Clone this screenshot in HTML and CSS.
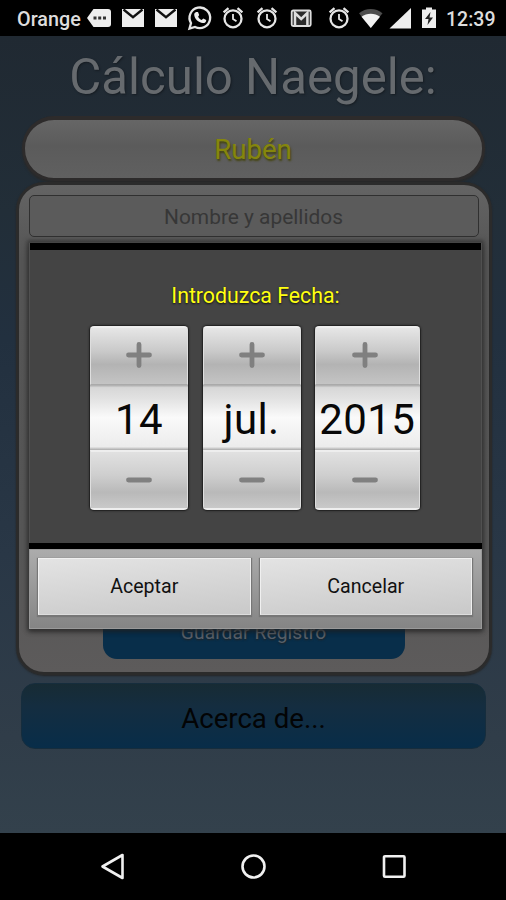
FILE: index.html
```html
<!DOCTYPE html>
<html lang="es">
<head>
<meta charset="utf-8">
<title>Cálculo Naegele</title>
<link rel="stylesheet" href="styles.css">
</head>
<body>
<svg class="defs" width="0" height="0">
  <defs>
    <symbol id="mail" viewBox="0 0 24 24"><path d="M1 3h22v18H1z" fill="#eee"/><path d="M2.500 3.500 12 11.200l9.500-7.700" fill="none" stroke="#111" stroke-width="2.300"/></symbol>
    <symbol id="alarm" viewBox="0 0 24 24"><g fill="none" stroke="#e6e6e6"><circle cx="12" cy="12.800" r="8.500" stroke-width="2.300"/><path d="M2.600 6.300 7.500 2.200M21.400 6.300 16.500 2.200" stroke-width="2.300"/><path d="M12 8v5l3.500 2.300" stroke-width="1.800"/></g></symbol>
    <symbol id="plus" viewBox="0 0 26 26"><path d="M13 2.500v21M2.500 13h21" stroke="#808080" stroke-width="4.800" stroke-linecap="round"/></symbol>
    <symbol id="minus" viewBox="0 0 26 26"><path d="M2.500 13h21" stroke="#808080" stroke-width="4.800" stroke-linecap="round"/></symbol>
  </defs>
</svg>
<div class="phone">
  <header class="status">
    <span class="carrier">Orange</span>
    <div class="icons notices">
      <svg viewBox="0 0 24 24"><path d="M0 12 6.500 3H21a3 3 0 0 1 3 3v12a3 3 0 0 1-3 3H6.500z" fill="#eee"/><path d="M6.500 10.500h3v3h-3zM11.200 10.500h3v3h-3zM16 10.500h3v3h-3z" fill="#333"/></svg>
      <svg><use href="#mail"/></svg>
      <svg><use href="#mail"/></svg>
      <svg viewBox="0 0 24 24"><path d="M1.500 22.500 3 17.100A10.300 10.300 0 1 1 7 20.900z" fill="none" stroke="#e6e6e6" stroke-width="2.300"/><path d="M8.200 6 10 5.900l1.200 3.100-1.100 1.700c.8 1.500 2 2.600 3.600 3.200l1.600-1.500 2.900 1.500c.2 1.800-1.300 3.300-3.300 3.200-4.600-.4-8.600-4.200-8.700-8.500 0-1.100.8-2.200 2-2.600z" fill="#eee"/></svg>
      <svg><use href="#alarm"/></svg>
      <svg><use href="#alarm"/></svg>
      <svg viewBox="0 0 24 24"><rect x="2.700" y="4.500" width="19" height="15.500" rx="1.500" fill="#2a2a2a" stroke="#ddd" stroke-width="1.800"/><path d="M6 19.500V7l6.200 6 6.200-6v12.500" fill="none" stroke="#ddd" stroke-width="2.500"/></svg>
    </div>
    <div class="icons system">
      <svg><use href="#alarm"/></svg>
      <svg viewBox="0 0 24 24"><path d="M2 7.200C8.500 1.500 19 1.500 25.500 7.200L13.800 22z" fill="#4d4d4d"/><path d="M4.500 10.800c5-4.200 13.500-4.200 18.500 0L13.800 22z" fill="#f2f2f2"/></svg>
      <svg viewBox="0 0 24 24"><path d="M2.500 22.500h21.500V2z" fill="#eee"/></svg>
      <svg viewBox="0 0 24 24"><path d="M5 3.500h4V1.500h6v2h4V22H5z" fill="#eee"/><path d="m13.500 6-5.500 7h3.500l-1 6 5.500-7.500h-3.500z" fill="#222"/></svg>
    </div>
    <time class="clock">12:39</time>
  </header>
  <main class="app">
    <h1 class="title">Cálculo Naegele:</h1>
    <div class="pill">Rubén</div>
    <section class="card">
      <div class="field">Nombre y apellidos</div>
      <div class="save">Guardar Registro</div>
    </section>
    <div class="about">Acerca de...</div>
  </main>
  <nav class="nav">
    <svg viewBox="0 0 28 28"><path d="M3.500 13.500 23.500 2v23z"/></svg>
    <svg viewBox="0 0 28 28"><circle cx="14.500" cy="13.500" r="11"/></svg>
    <svg viewBox="0 0 28 28"><rect x="4" y="3.200" width="20.500" height="20.500" rx="1"/></svg>
  </nav>
  <div class="dialog">
    <div class="panel">
      <div class="prompt">Introduzca Fecha:</div>
      <div class="pickers">
        <div class="picker"><div class="step up"><svg><use href="#plus"/></svg></div><div class="value">14</div><div class="step down"><svg><use href="#minus"/></svg></div></div>
        <div class="picker"><div class="step up"><svg><use href="#plus"/></svg></div><div class="value month">jul.</div><div class="step down"><svg><use href="#minus"/></svg></div></div>
        <div class="picker year"><div class="step up"><svg><use href="#plus"/></svg></div><div class="value">2015</div><div class="step down"><svg><use href="#minus"/></svg></div></div>
      </div>
    </div>
    <div class="actions">
      <div class="action">Aceptar</div>
      <div class="action">Cancelar</div>
    </div>
  </div>
</div>
</body>
</html>
```
FILE: styles.css
```css
* { box-sizing: border-box; }
body { margin: 0; background: #000; font-family: Roboto, "Liberation Sans", sans-serif; }
.defs { display: block; }
.phone { position: relative; width: 506px; height: 900px; display: flex; flex-direction: column; overflow: hidden; }

.status { height: 36px; background: #000; display: flex; align-items: center; color: #ddd; padding-left: 17px; font-weight: 500; white-space: nowrap; }
.carrier { width: 70px; font-size: 19.8px; padding-top: 3px; }
.icons { display: flex; }
.icons svg { width: 24px; height: 24px; flex: none; overflow: visible; }
.notices { gap: 9.6px; width: 240px; }
.system { gap: 6px; width: 119px; }
.clock { font-size: 19.500px; padding-top: 3px; }

.app { height: 797px; display: flex; flex-direction: column; align-items: center; background: linear-gradient(#202932 0%, #222e38 22%, #22303f 38%, #293746 65%, #303d49 88%, #33414c 100%); }
.title { margin: 11px 0 0; height: 69px; line-height: 61px; font-size: 49.2px; font-weight: 400; color: #666a6e; text-shadow: 1px 1px 2px #161c22; white-space: nowrap; }
.pill { width: 463px; height: 65px; border: 3px solid #2d2b2b; border-top-width: 4px; border-radius: 32px; background: linear-gradient(#666, #5b5b5b 45%, #606060); box-shadow: 0 2px 2px #292929; text-align: center; line-height: 59px; font-size: 27.6px; color: #85860c; text-shadow: 1px 2px 2px #44440f; }
.card { width: 476px; height: 493px; margin: 1px 0 0 1px; padding: 10px 9px; border: 3px solid #2b2b2b; border-radius: 28px; background: linear-gradient(#646464, #555 15%, #565656 75%, #5d5b5b); box-shadow: 0 1px 2px #252525; display: flex; flex-direction: column; align-items: center; justify-content: space-between; }
.field { width: 450px; height: 42px; border: 1.500px solid #303030; border-radius: 5px; line-height: 43px; text-align: center; font-size: 20.9px; color: #373737; background: #5b5b5b; }
.save { width: 302px; height: 50px; margin-bottom: 3px; border-radius: 14px; background: #082e4a; line-height: 48px; text-align: center; font-size: 19.2px; letter-spacing: .1px; color: #586069; text-shadow: 0 1px 2px #222; }
.about { width: 465px; height: 66px; margin: 8px 0 0 1px; border-radius: 14px; border: 1px solid #162d3d; background: linear-gradient(#172b34, #142d40 35%, #082d49); text-align: center; line-height: 69px; font-size: 27.6px; color: #030405; }

.dialog { position: absolute; left: 29px; top: 242px; width: 453px; height: 387px; box-shadow: 0 0 4px 2px rgba(45,45,45,.65), 0 3px 5px rgba(0,0,0,.4); display: flex; flex-direction: column; }
.panel { height: 307px; background: #444 linear-gradient(#000, #000) 0 0 / 100% 7px no-repeat; border-top: 1px solid #444; border-bottom: 6px solid #000; box-shadow: inset 1px 0 #505050, inset -1px 0 #505050; display: flex; flex-direction: column; }
.prompt { height: 82px; padding-top: 40px; line-height: 26px; text-align: center; font-size: 21.3px; color: #ff1; text-shadow: 0 1px 2px #111; }
.pickers { display: flex; gap: 12.500px; padding-left: 60px; }
.picker { width: 100px; height: 186px; display: flex; flex-direction: column; border: 1px solid #242424; border-radius: 5px; overflow: hidden; box-shadow: 0 0 2px #222; }
.year { width: 106.500px; }
.year .step { padding-right: 4px; }
.step { height: 60px; display: flex; align-items: center; justify-content: center; border: 1px solid #dedede; border-top: 2px solid #eee; background: linear-gradient(#e6e6e6, #c9c9c9 42%, #b3b3b3 65%, #c4c4c4); }
.up { height: 59px; padding-bottom: 3px; border-bottom-color: #aaa; }
.down { border-bottom: 2px solid #eee; background: linear-gradient(#e1e1e1, #cecece 42%, #b9b9b9 72%, #c9c9c9); }
.step svg { width: 26px; height: 26px; }
.value { height: 65px; line-height: 69px; text-align: center; font-size: 42px; letter-spacing: .4px; color: #080808; background: linear-gradient(#aaa, #d7d7d7 4%, #e1e1e1 20%, #fafafa 50%, #ececec 95%, #aaa); white-space: nowrap; }
.actions { height: 80px; padding: 8px 9px 14px 8px; display: flex; gap: 9px; background: linear-gradient(#acacac, #858585); border: 1px solid #999; }
.action { flex: 1; height: 57px; border: 1px solid #f0f0f0; border-bottom-color: #ddd; background: linear-gradient(175deg, #e3e3e3, #c9c9c9); box-shadow: 0 1px 1px 1px #777; text-align: center; line-height: 56px; font-size: 19.6px; color: #111; }

.nav { height: 67px; background: #000; display: flex; align-items: center; justify-content: center; gap: 112.500px; }
.nav svg { width: 28px; height: 28px; fill: none; stroke: #f1f1f1; stroke-width: 2.600; stroke-linejoin: round; }
```
